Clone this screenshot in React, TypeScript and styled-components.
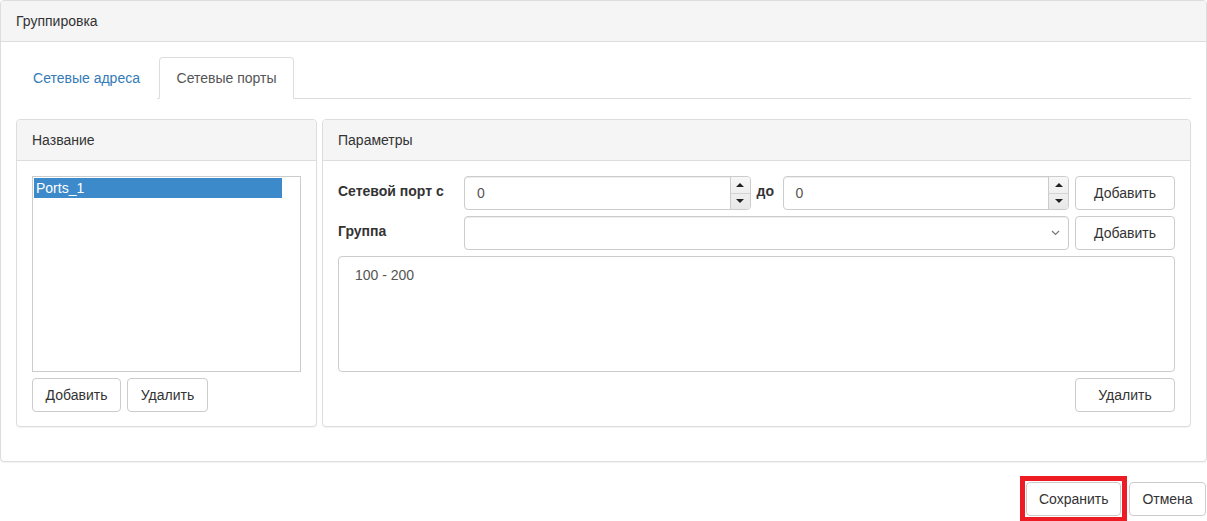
import styled, { createGlobalStyle } from 'styled-components';

const GlobalStyle = createGlobalStyle`
  html, body {
    margin: 0;
    padding: 0;
    background: #fff;
  }
  body {
    font-family: 'Liberation Sans', Arial, sans-serif;
    font-size: 14px;
    color: #333;
  }
  * {
    box-sizing: border-box;
  }
`;

const Styled = {
  Page: styled.div`
    width: 1207px;
  `,
  Panel: styled.section`
    border: 1px solid #ddd;
    border-radius: 4px;
    background: #fff;
    box-shadow: 0 1px 1px rgba(0, 0, 0, 0.05);
  `,
  PanelHeading: styled.div`
    height: 41px;
    padding: 0 15px;
    display: flex;
    align-items: center;
    background: #f5f5f5;
    border-bottom: 1px solid #ddd;
    border-radius: 3px 3px 0 0;
  `,
  PanelBody: styled.div`
    padding: 15px 15px 14px;
  `,
  Tabs: styled.ul`
    display: flex;
    margin: 0;
    padding: 0;
    list-style: none;
    border-bottom: 1px solid #ddd;
  `,
  Tab: styled.li<{ active?: boolean; width: number }>`
    width: ${({ width }) => width}px;
    margin-right: 2px;
    margin-bottom: -1px;
    height: 42px;
    display: flex;
    align-items: center;
    justify-content: center;
    border: 1px solid ${({ active }) => (active ? '#ddd' : 'transparent')};
    border-bottom-color: ${({ active }) => (active ? '#fff' : 'transparent')};
    border-radius: 4px 4px 0 0;
    background: #fff;
    color: ${({ active }) => (active ? '#555' : '#337ab7')};
    cursor: pointer;
  `,
  Columns: styled.div`
    display: grid;
    grid-template-columns: 301px 1fr;
    gap: 5px;
    margin-top: 20px;
    margin-bottom: 20px;
  `,
  ListBox: styled.div`
    height: 196px;
    border: 1px solid #ccc;
    padding: 1px;
  `,
  ListItem: styled.div<{ selected?: boolean }>`
    width: 248px;
    height: 20px;
    padding: 0 2px;
    line-height: 20px;
    background: ${({ selected }) => (selected ? '#3d8acb' : 'transparent')};
    color: ${({ selected }) => (selected ? '#fff' : '#333')};
  `,
  ButtonRow: styled.div<{ end?: boolean }>`
    display: flex;
    gap: 6px;
    margin-top: 6px;
    justify-content: ${({ end }) => (end ? 'flex-end' : 'flex-start')};
  `,
  Button: styled.button<{ width?: number }>`
    height: 34px;
    width: ${({ width }) => (width ? `${width}px` : 'auto')};
    padding: 0 12px;
    border: 1px solid #ccc;
    border-radius: 4px;
    background: #fff;
    color: #333;
    font-family: inherit;
    font-size: 14px;
    cursor: pointer;
    flex-shrink: 0;
  `,
  Marker: styled.div`
    display: flex;
    padding: 1px;
    border: 5px solid #ed1c24;
  `,
  FormRow: styled.div`
    display: flex;
    align-items: center;
    gap: 6px;
    margin-bottom: 6px;
  `,
  Label: styled.label<{ width: number }>`
    width: ${({ width }) => width}px;
    flex-shrink: 0;
    font-weight: bold;
    margin-top: -4px;
  `,
  Field: styled.div`
    flex: 1;
    height: 34px;
    display: flex;
    align-items: stretch;
    border: 1px solid #ccc;
    border-radius: 4px;
    background: #fff;
    box-shadow: inset 0 1px 1px rgba(0, 0, 0, 0.075);
    overflow: hidden;
  `,
  FieldValue: styled.div`
    flex: 1;
    display: flex;
    align-items: center;
    padding: 0 12px;
    color: #555;
  `,
  Spinner: styled.div`
    width: 20px;
    display: flex;
    flex-direction: column;
    border-left: 1px solid #ccc;
    background: linear-gradient(#f7f7f7, #e8e8e8);
  `,
  SpinHalf: styled.div<{ down?: boolean }>`
    flex: 1;
    display: flex;
    align-items: center;
    justify-content: center;
    border-top: ${({ down }) => (down ? '1px solid #d4d4d4' : 'none')};
    &::after {
      content: '';
      border-left: 4px solid transparent;
      border-right: 4px solid transparent;
      ${({ down }) => (down ? 'border-top: 4px solid #222;' : 'border-bottom: 4px solid #222;')}
    }
  `,
  Chevron: styled.div`
    width: 26px;
    display: flex;
    align-items: center;
    justify-content: center;
  `,
  Output: styled.div`
    height: 116px;
    padding: 10px 16px;
    border: 1px solid #ccc;
    border-radius: 4px;
    color: #555;
  `,
  Footer: styled.div`
    display: flex;
    justify-content: flex-end;
    align-items: center;
    gap: 2px;
    margin-top: 14px;
    padding-right: 1px;
  `,
};

const NumberField = ({ value }: { value: string }) => (
  <Styled.Field>
    <Styled.FieldValue>{value}</Styled.FieldValue>
    <Styled.Spinner>
      <Styled.SpinHalf />
      <Styled.SpinHalf down />
    </Styled.Spinner>
  </Styled.Field>
);

const App = () => {
  return (
    <Styled.Page>
      <GlobalStyle />
      <Styled.Panel>
        <Styled.PanelHeading>Группировка</Styled.PanelHeading>
        <Styled.PanelBody>
          <Styled.Tabs>
            <Styled.Tab width={141}>Сетевые адреса</Styled.Tab>
            <Styled.Tab width={135} active>
              Сетевые порты
            </Styled.Tab>
          </Styled.Tabs>

          <Styled.Columns>
            <Styled.Panel>
              <Styled.PanelHeading>Название</Styled.PanelHeading>
              <Styled.PanelBody>
                <Styled.ListBox>
                  <Styled.ListItem selected>Ports_1</Styled.ListItem>
                </Styled.ListBox>
                <Styled.ButtonRow>
                  <Styled.Button width={89}>Добавить</Styled.Button>
                  <Styled.Button width={81}>Удалить</Styled.Button>
                </Styled.ButtonRow>
              </Styled.PanelBody>
            </Styled.Panel>

            <Styled.Panel>
              <Styled.PanelHeading>Параметры</Styled.PanelHeading>
              <Styled.PanelBody>
                <Styled.FormRow>
                  <Styled.Label width={120}>Сетевой порт с</Styled.Label>
                  <NumberField value="0" />
                  <Styled.Label width={20}>до</Styled.Label>
                  <NumberField value="0" />
                  <Styled.Button width={100}>Добавить</Styled.Button>
                </Styled.FormRow>
                <Styled.FormRow>
                  <Styled.Label width={120}>Группа</Styled.Label>
                  <Styled.Field>
                    <Styled.FieldValue />
                    <Styled.Chevron>
                      <svg width="9" height="6" viewBox="0 0 9 6">
                        <path d="M1 1l3.5 3.5L8 1" fill="none" stroke="#777" strokeWidth="1.2" />
                      </svg>
                    </Styled.Chevron>
                  </Styled.Field>
                  <Styled.Button width={100}>Добавить</Styled.Button>
                </Styled.FormRow>
                <Styled.Output>100 - 200</Styled.Output>
                <Styled.ButtonRow end>
                  <Styled.Button width={100}>Удалить</Styled.Button>
                </Styled.ButtonRow>
              </Styled.PanelBody>
            </Styled.Panel>
          </Styled.Columns>
        </Styled.PanelBody>
      </Styled.Panel>

      <Styled.Footer>
        <Styled.Marker>
          <Styled.Button width={95}>Сохранить</Styled.Button>
        </Styled.Marker>
        <Styled.Button width={77}>Отмена</Styled.Button>
      </Styled.Footer>
    </Styled.Page>
  );
};

export default App;
